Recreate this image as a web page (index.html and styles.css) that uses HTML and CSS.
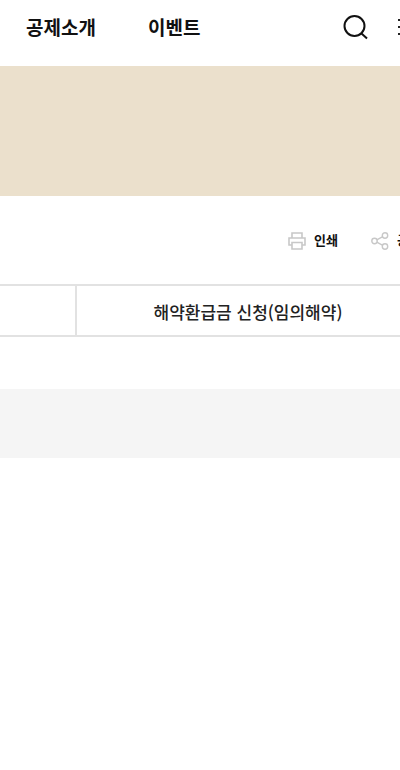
FILE: index.html
```
<!DOCTYPE html>
<html lang="ko">
<head>
<meta charset="utf-8">
<title>해약환급금 신청</title>
<link rel="stylesheet" href="styles.css">
</head>
<body>
<div class="page">
  <header class="header">
    <nav class="nav">
      <a class="nav-item">공제소개</a>
      <a class="nav-item">이벤트</a>
    </nav>
    <div class="header-icons">
      <svg class="icon-search" width="26" height="26" viewBox="0 0 26 26" fill="none" stroke="#111" stroke-width="2"><circle cx="11.5" cy="11" r="10"/><path d="M18.5 18.5l5.5 5"/></svg>
      <span class="menu-dots"><i></i><i></i><i></i></span>
    </div>
  </header>
  <div class="banner"></div>
  <div class="tools">
    <a class="tool">
      <svg width="18" height="18" viewBox="0 0 18 18" fill="none" stroke="#c8c8c8" stroke-width="1.6"><path d="M4 6V1h10v5M4 13H1V6h16v7h-3"/><path d="M4 10.5h10V17H4z"/></svg>
      <span>인쇄</span>
    </a>
    <a class="tool">
      <svg width="18" height="18" viewBox="0 0 18 18" fill="none" stroke="#c8c8c8" stroke-width="1.4"><circle cx="3.5" cy="9" r="2.7"/><circle cx="14" cy="3.5" r="2.7"/><circle cx="14" cy="14.5" r="2.7"/><path d="M5.8 7.8l6-3.2M5.8 10.2l6 3.2"/></svg>
      <span>공유</span>
    </a>
  </div>
  <div class="tabs">
    <div class="tab tab-first"></div>
    <div class="tab tab-main">해약환급금 신청(임의해약)</div>
  </div>
  <div class="band"></div>
</div>
</body>
</html>
```
FILE: styles.css
```
* { box-sizing: border-box; }
html, body { margin: 0; padding: 0; background: #fff; overflow: hidden; }
body { width: 400px; height: 770px; font-family: "Noto Sans CJK KR", "Noto Sans", sans-serif; color: #111; }
.page { width: 400px; overflow: hidden; }
.header { height: 66px; display: flex; justify-content: space-between; align-items: center; padding: 0 0 12px 26px; }
.nav { display: flex; gap: 52px; }
.nav-item { font-size: 19px; font-weight: 700; line-height: 26px; }
.header-icons { display: flex; align-items: center; gap: 29px; width: 57px; flex: none; overflow: hidden; margin-top: 2px; }
.icon-search { flex: none; }
.menu-dots { display: flex; flex-direction: column; gap: 5px; flex: none; margin-top: -2px; }
.menu-dots i { display: block; width: 6px; height: 2px; background: #222; }
.banner { height: 130px; background: #ebe0cc; }
.tools { height: 89px; display: flex; gap: 33px; padding: 36px 0 0 288px; width: 460px; }
.tool { display: flex; align-items: flex-start; gap: 8px; font-size: 13px; font-weight: 700; line-height: 16px; height: 20px; flex: none; }
.tabs { height: 53px; display: flex; border-top: 2px solid #e2e2e2; border-bottom: 2px solid #e2e2e2; margin-top: -1px; }
.tab-first { width: 77px; border-right: 2px solid #e2e2e2; flex: none; }
.tab-main { flex: 1; padding-left: 19px; text-align: center; font-size: 17px; font-weight: 500; line-height: 52px; color: #222; white-space: nowrap; }
.band { height: 69px; margin-top: 52px; background: #f5f5f5; }
```
